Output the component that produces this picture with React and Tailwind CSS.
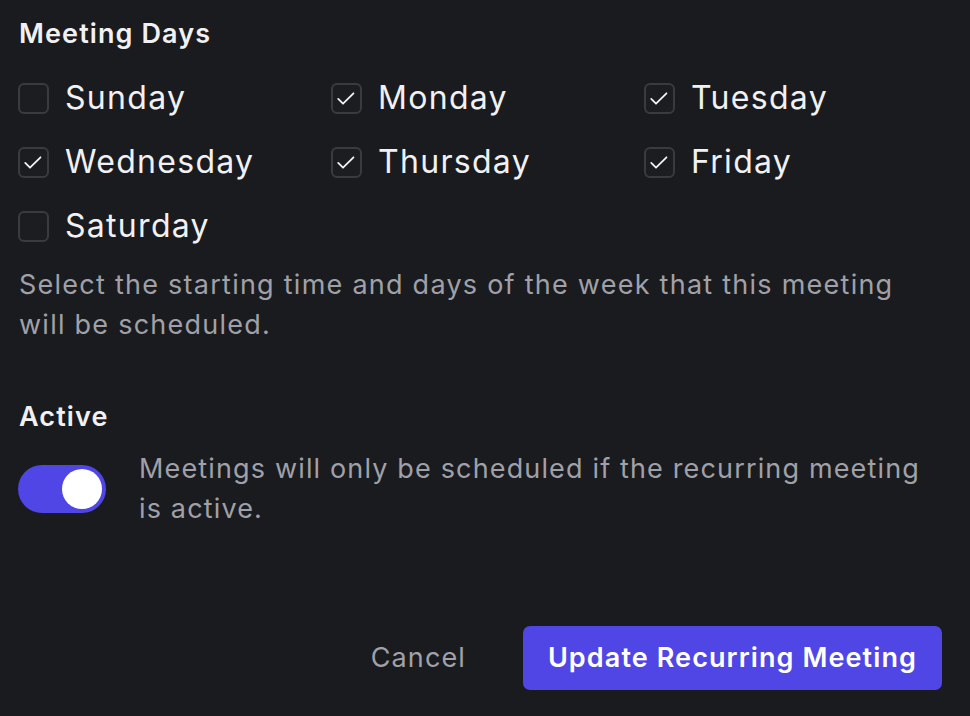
import React, { useState } from "react";

const days = [
  { name: "Sunday", on: false },
  { name: "Monday", on: true },
  { name: "Tuesday", on: true },
  { name: "Wednesday", on: true },
  { name: "Thursday", on: true },
  { name: "Friday", on: true },
  { name: "Saturday", on: false },
];

const font = { fontFamily: "Inter, 'Noto Sans', sans-serif" };

const DayBox = ({ name, on, toggle }) => {
  return (
    <label className="flex h-12 cursor-pointer items-center gap-4">
      <span
        onClick={toggle}
        className="flex h-[31px] w-[31px] items-center justify-center rounded-[6px] border-2 border-[#3a3b40] bg-[#1c1d21]"
      >
        {on && (
          <svg viewBox="0 0 31 31" className="h-[31px] w-[31px]">
            <polyline
              points="6,16 11.5,21.5 23.5,9.5"
              fill="none"
              stroke="#f4f4f5"
              strokeWidth="2"
              strokeLinecap="round"
              strokeLinejoin="round"
            />
          </svg>
        )}
      </span>
      <span className="text-[32px] leading-[48px] tracking-[1.3px] text-[#f1f1f3]">
        {name}
      </span>
    </label>
  );
};

const App = () => {
  const [checked, setChecked] = useState(days.map((d) => d.on));
  const [active, setActive] = useState(true);

  return (
    <main
      style={font}
      className="flex min-h-[716px] w-full flex-col bg-[#1a1b1e] pl-[18px] pr-[28px] pt-[14px]"
    >
      <h2 className="pl-px text-[27px] font-semibold leading-[40px] tracking-[1.1px] text-[#f1f1f3]">
        Meeting Days
      </h2>
      <div className="mt-5 grid grid-cols-[313px_313px_1fr] gap-y-4">
        {days.map((d, i) => (
          <DayBox
            key={d.name}
            name={d.name}
            on={checked[i]}
            toggle={() =>
              setChecked(checked.map((c, j) => (j === i ? !c : c)))
            }
          />
        ))}
      </div>
      <p className="mt-[15px] pl-px text-[27px] leading-[40px] tracking-[1.25px] text-[#a0a1a8]">
        Select the starting time and days of the week that this meeting
        <br />
        will be scheduled.
      </p>

      <h2 className="mt-[52px] pl-px text-[27px] font-semibold leading-[40px] tracking-[1.1px] text-[#f1f1f3]">
        Active
      </h2>
      <div className="mt-3 flex items-center gap-[33px]">
        <button
          onClick={() => setActive(!active)}
          className={`flex h-12 w-[88px] shrink-0 items-center rounded-full p-1 ${
            active ? "justify-end bg-[#4f46e5]" : "justify-start bg-[#3a3b40]"
          }`}
        >
          <span className="h-10 w-10 rounded-full bg-white" />
        </button>
        <p className="text-[27px] leading-[40px] tracking-[1.15px] text-[#a0a1a8]">
          Meetings will only be scheduled if the recurring meeting
          <br />
          is active.
        </p>
      </div>

      <div className="mt-[97px] flex items-center justify-end gap-[57px]">
        <button className="text-[27px] leading-[40px] tracking-[1.1px] text-[#a1a1a8]">
          Cancel
        </button>
        <button className="h-16 rounded-[7px] bg-[#4f46e5] px-[25px] text-[27px] font-semibold tracking-[1.1px] text-white">
          Update Recurring Meeting
        </button>
      </div>
    </main>
  );
};

export default App;
